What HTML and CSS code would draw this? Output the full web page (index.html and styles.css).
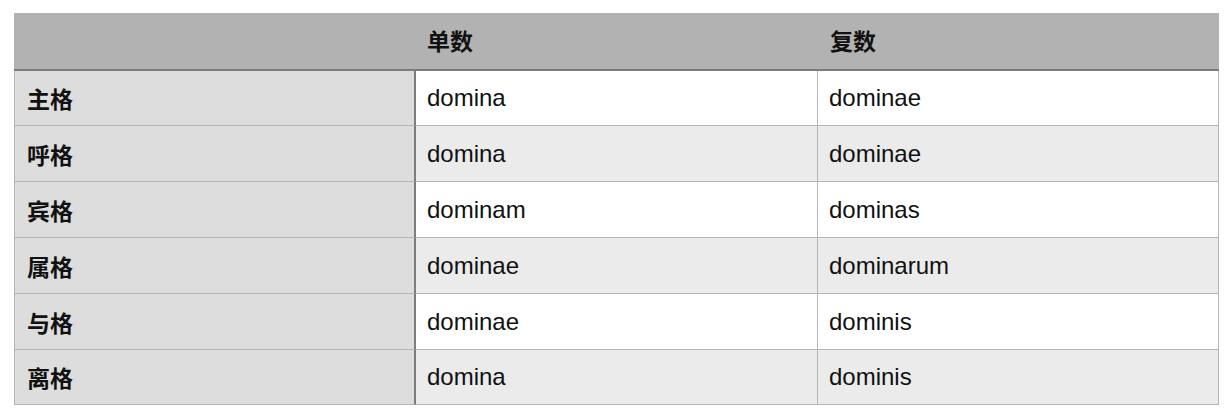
FILE: index.html
```html
<!DOCTYPE html>
<html lang="zh-CN">
<head>
<meta charset="utf-8">
<title>拉丁语名词变格</title>
<link rel="stylesheet" href="styles.css">
</head>
<body>
<div class="table">
  <div class="cell head head-first"></div>
  <div class="cell head head-mid">单数</div>
  <div class="cell head head-last">复数</div>

  <div class="cell rowhead r1">主格</div>
  <div class="cell mid odd r1">domina</div>
  <div class="cell last odd r1">dominae</div>

  <div class="cell rowhead">呼格</div>
  <div class="cell mid even">domina</div>
  <div class="cell last even">dominae</div>

  <div class="cell rowhead">宾格</div>
  <div class="cell mid odd">dominam</div>
  <div class="cell last odd">dominas</div>

  <div class="cell rowhead">属格</div>
  <div class="cell mid even">dominae</div>
  <div class="cell last even">dominarum</div>

  <div class="cell rowhead">与格</div>
  <div class="cell mid odd">dominae</div>
  <div class="cell last odd">dominis</div>

  <div class="cell rowhead r6">离格</div>
  <div class="cell mid even r6">domina</div>
  <div class="cell last even r6">dominis</div>
</div>
</body>
</html>
```
FILE: styles.css
```css
html, body {
  margin: 0;
  padding: 0;
  background: #ffffff;
}

body {
  font-family: "Liberation Sans", "Noto Sans CJK SC", sans-serif;
  font-size: 24px;
  color: #111111;
}

.table {
  display: grid;
  grid-template-columns: 402px 402px 401px;
  grid-auto-rows: 56px;
  grid-template-rows: 58px 55px 56px 56px 56px 56px 55px;
  width: 1205px;
  margin: 13px 0 0 14px;
}

.cell {
  box-sizing: border-box;
  display: flex;
  align-items: center;
  white-space: nowrap;
}

.head {
  background: #b1b2b1;
  border-bottom: 2px solid #7c7c7c;
  font-weight: bold;
  font-family: "Noto Sans CJK SC", "Liberation Sans", sans-serif;
  font-size: 23px;
  padding-bottom: 2px;
}

.head-mid {
  padding-left: 11px;
}

.head-last {
  padding-left: 12px;
}

.rowhead {
  background: #dcdddc;
  border-left: 1px solid #b5b5b5;
  border-right: 2px solid #7c7c7c;
  border-bottom: 1px solid #b5b5b5;
  padding-left: 12px;
  font-weight: bold;
  font-family: "Noto Sans CJK SC", "Liberation Sans", sans-serif;
  font-size: 23px;
}

.mid {
  border-right: 1px solid #b5b5b5;
  border-bottom: 1px solid #b5b5b5;
  padding-left: 11px;
}

.last {
  border-right: 1px solid #b5b5b5;
  border-bottom: 1px solid #b5b5b5;
  padding-left: 11px;
}

.odd {
  background: #ffffff;
}

.even {
  background: #ebebeb;
}
```
